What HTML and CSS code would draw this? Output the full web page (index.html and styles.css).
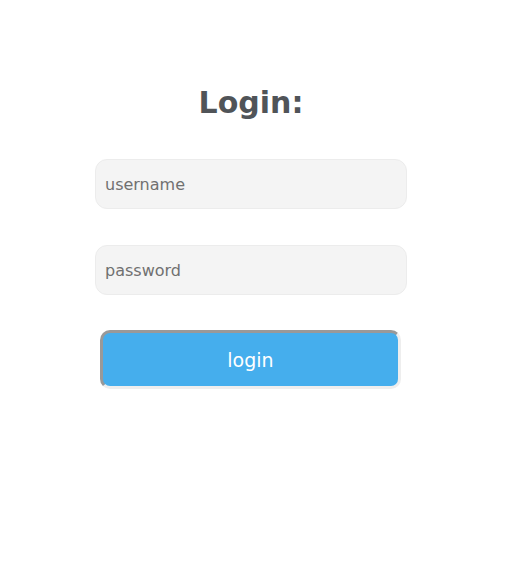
FILE: index.html
```html
<!DOCTYPE html>
<html lang="en">
<head>
    <meta charset="UTF-8">
    <meta name="viewport" content="width=device-width, initial-scale=1.0">
    <title>Login</title>
    <link rel="stylesheet" href="styles.css">
</head>
<body>
    <div class="container">
        <h1>Login:</h1>
        <form id="login-form">
            <input type="text" id="username" placeholder="username">
            <input type="password" id="password" placeholder="password">
            <button type="submit">login</button>
        </form>
    </div>
</body>
</html>
```

FILE: styles.css
```css
body {
    font-family: "DejaVu Sans", Verdana, sans-serif;
    margin: 0;
    padding: 0 4px 0 0;
    background-color: #fff;
    color: #555;
}
.container {
    width: 312px;
    margin: 0 auto;
    padding-top: 83px;
}
h1 {
    margin: 0 0 36px;
    text-align: center;
    font-size: 30px;
    line-height: 40px;
    color: #505458;
}
form {
    display: flex;
    flex-direction: column;
    align-items: center;
}
input[type="text"],
input[type="password"] {
    box-sizing: border-box;
    width: 312px;
    height: 50px;
    margin-bottom: 36px;
    padding: 0 9px;
    background-color: #f4f4f4;
    border: 1px solid #ececec;
    border-radius: 12px;
    font-family: inherit;
    font-size: 16px;
    color: #555;
    outline: none;
}
input::placeholder {
    color: #707070;
}
button {
    box-sizing: border-box;
    width: 301px;
    height: 59px;
    margin-top: -1px;
    margin-left: -1px;
    background-color: #45aeed;
    color: #fff;
    border: 3px solid #999;
    border-right-color: #eee;
    border-bottom-color: #eee;
    border-radius: 10px;
    font-family: inherit;
    font-size: 19px;
    cursor: pointer;
}
```
